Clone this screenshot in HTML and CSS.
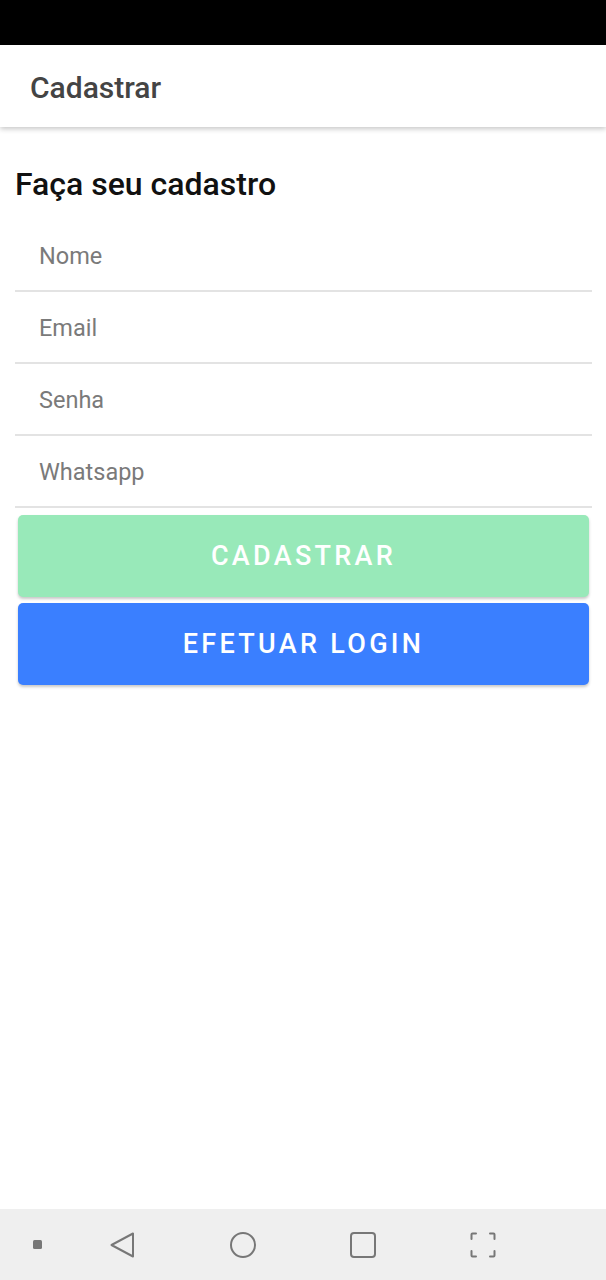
FILE: index.html
```html
<!DOCTYPE html>
<html lang="pt-BR">
<head>
<meta charset="utf-8">
<title>Cadastrar</title>
<link rel="stylesheet" href="styles.css">
</head>
<body>
<div class="screen">
  <div class="status-bar"></div>
  <header class="app-bar">
    <h1 class="app-title">Cadastrar</h1>
  </header>
  <main class="content">
    <h2 class="heading">Faça seu cadastro</h2>
    <form class="form">
      <div class="field"><input class="input" type="text" placeholder="Nome"></div>
      <div class="field"><input class="input" type="email" placeholder="Email"></div>
      <div class="field"><input class="input" type="password" placeholder="Senha"></div>
      <div class="field"><input class="input" type="tel" placeholder="Whatsapp"></div>
      <div class="buttons">
        <button type="button" class="btn btn-green">CADASTRAR</button>
        <button type="button" class="btn btn-blue">EFETUAR LOGIN</button>
      </div>
    </form>
  </main>
  <nav class="nav-bar">
    <span class="nav-dot"></span>
    <svg class="nav-icon" viewBox="0 0 26 26" width="26" height="26"><path d="M23 1.5 V24.5 L1.5 13 Z" fill="none" stroke="#777" stroke-width="2" stroke-linejoin="round"/></svg>
    <svg class="nav-icon" viewBox="0 0 26 26" width="26" height="26"><circle cx="13" cy="13" r="12" fill="none" stroke="#777" stroke-width="2"/></svg>
    <svg class="nav-icon" viewBox="0 0 26 26" width="26" height="26"><rect x="1" y="1" width="24" height="24" rx="3" fill="none" stroke="#777" stroke-width="2"/></svg>
    <svg class="nav-icon" viewBox="0 0 26 26" width="26" height="26"><path d="M1.5 7 V2.5 Q1.5 1.5 2.5 1.5 H6 M20 1.5 H23.5 Q24.5 1.5 24.5 2.5 V7 M24.5 19 V23.5 Q24.5 24.5 23.5 24.5 H20 M6 24.5 H2.5 Q1.5 24.5 1.5 23.5 V19" fill="none" stroke="#777" stroke-width="2" stroke-linecap="round"/></svg>
  </nav>
</div>
</body>
</html>
```

FILE: styles.css
```css
* { box-sizing: border-box; }

html, body {
  margin: 0;
  padding: 0;
  background: #fff;
}

body {
  font-family: Roboto, "Noto Sans", "Liberation Sans", sans-serif;
}

.screen {
  width: 606px;
  height: 1280px;
  display: flex;
  flex-direction: column;
  overflow: hidden;
}

.status-bar {
  height: 45px;
  background: #000;
  flex: none;
}

.app-bar {
  height: 82px;
  flex: none;
  display: flex;
  align-items: center;
  padding-left: 30px;
  background: #fff;
  box-shadow: 0 2px 5px rgba(0, 0, 0, 0.22);
  position: relative;
  z-index: 1;
}

.app-title {
  margin: 0;
  font-size: 30px;
  font-weight: 500;
  color: #444;
  padding-top: 2px;
}

.content {
  flex: 1;
  padding: 38px 14px 0 15px;
}

.heading {
  margin: 0;
  font-size: 32px;
  line-height: 38px;
  font-weight: 500;
  color: #111;
}

.form {
  margin: 17px 0 0;
  display: flex;
  flex-direction: column;
}

.field {
  height: 72px;
  border-bottom: 2px solid #e3e3e3;
  display: flex;
  align-items: center;
}

.input {
  width: 100%;
  height: 100%;
  border: 0;
  outline: none;
  padding: 1px 0 0 24px;
  font-family: Roboto, "Noto Sans", "Liberation Sans", sans-serif;
  font-size: 23.5px;
  color: #333;
  background: transparent;
}

.input::placeholder {
  color: #7a7a7a;
}

.buttons {
  display: flex;
  flex-direction: column;
  gap: 6px;
  padding: 7px 3px 0;
}

.btn {
  height: 82px;
  border: 0;
  border-radius: 5px;
  font-family: Roboto, "Noto Sans", "Liberation Sans", sans-serif;
  font-size: 27px;
  font-weight: 500;
  letter-spacing: 3.3px;
  color: #fff;
  box-shadow: 0 2px 3px rgba(0, 0, 0, 0.22);
}

.btn-green {
  background: #98e9b9;
}

.btn-blue {
  background: #3a7fff;
}

.nav-bar {
  height: 71px;
  flex: none;
  background: #efefef;
  display: flex;
  align-items: center;
  padding-left: 33px;
  gap: 94px;
}

.nav-dot {
  width: 9px;
  height: 9px;
  border-radius: 1.5px;
  background: #777;
  margin-right: -26px;
}

.nav-icon {
  display: block;
  flex: none;
}
```
